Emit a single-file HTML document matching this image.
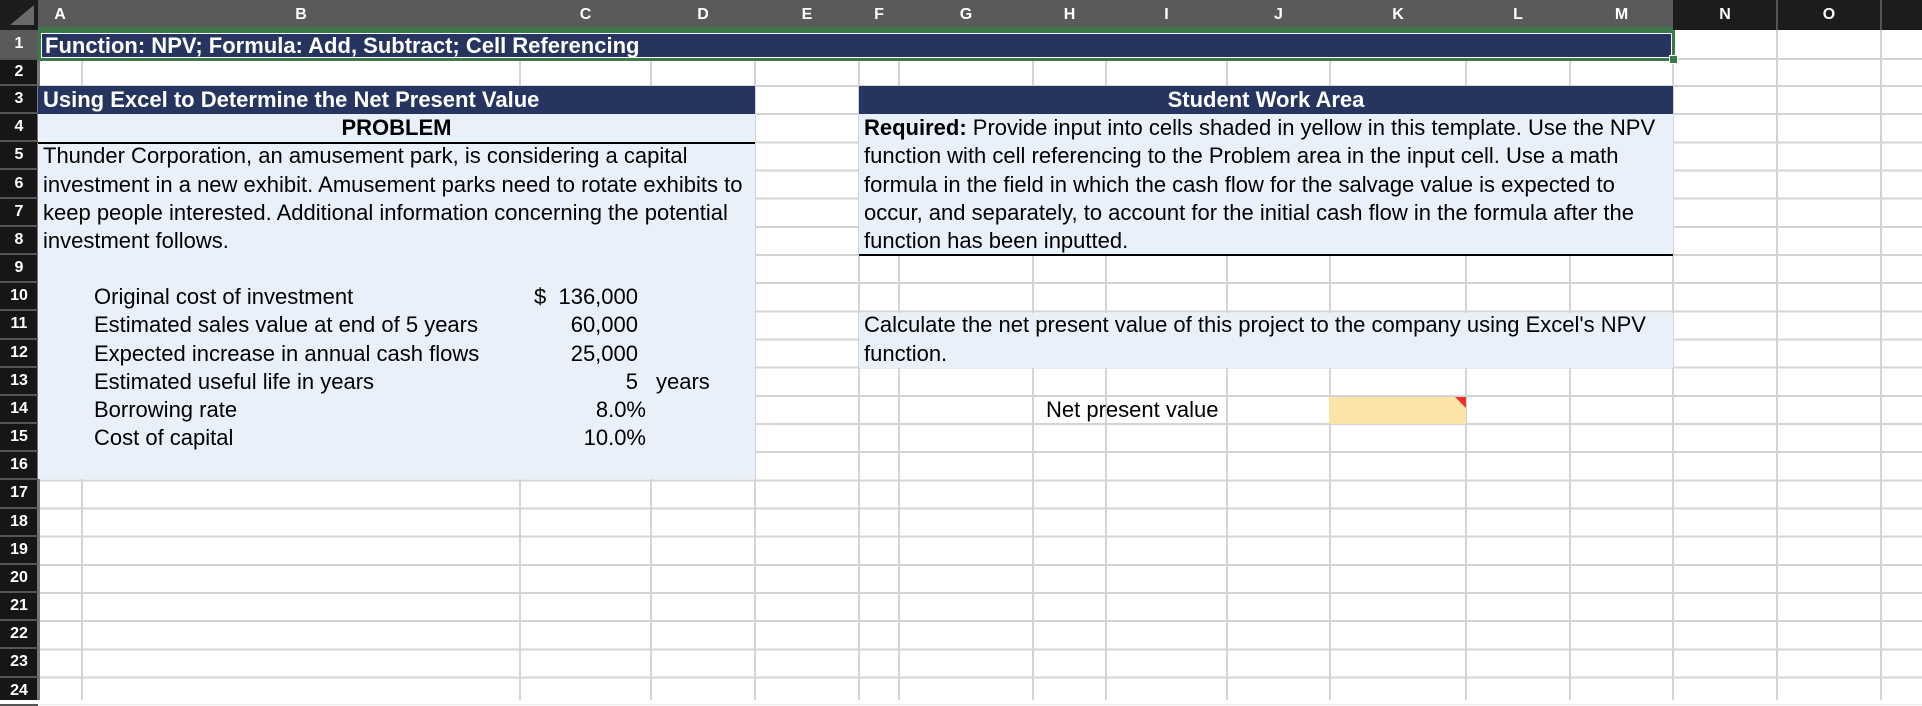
<!DOCTYPE html>
<html><head><meta charset="utf-8"><style>
*{margin:0;padding:0;box-sizing:border-box}
body{width:1922px;height:700px;overflow:hidden;background:#fff;position:relative;font-family:"Liberation Sans",Arial,sans-serif;font-size:22px;color:#000}
.a{position:absolute}
.v{position:absolute;top:30px;height:670px;width:2px;background:#d4d4d4}
.hdr{position:absolute;top:0;height:30px;color:#fff;font-size:16px;font-weight:bold;text-align:center;line-height:30px}
.rn{position:absolute;left:0;width:38px;color:#fff;font-size:16px;font-weight:bold;text-align:center;border-bottom:2px solid #555}
.t{position:absolute;white-space:nowrap;line-height:28px;height:28px}
.r{text-align:right}
</style></head><body>
<div class="a" style="left:38px;top:58px;width:1884px;height:2px;background:#d4d4d4"></div>
<div class="a" style="left:38px;top:85px;width:1884px;height:620px;background:repeating-linear-gradient(to bottom,#d4d4d4 0 2px,transparent 2px 28.17px)"></div>
<div class="v" style="left:81px"></div><div class="v" style="left:519px"></div><div class="v" style="left:650px"></div><div class="v" style="left:754px"></div><div class="v" style="left:858px"></div><div class="v" style="left:898px"></div><div class="v" style="left:1032px"></div><div class="v" style="left:1105px"></div><div class="v" style="left:1226px"></div><div class="v" style="left:1329px"></div><div class="v" style="left:1465px"></div><div class="v" style="left:1569px"></div><div class="v" style="left:1672px"></div><div class="v" style="left:1776px"></div><div class="v" style="left:1880px"></div>

<div class="a" style="left:0;top:0;width:1922px;height:30px;background:#1c1c1c"></div>
<div class="a" style="left:38px;top:0;width:1635px;height:30px;background:#5a5a5a"></div>
<div class="a" style="left:38px;top:27px;width:1635px;height:3px;background:#3d7a4b"></div>
<svg class="a" style="left:4px;top:3px" width="32" height="24"><polygon points="30,2 30,22 6,22" fill="#6a6a6a"/></svg>
<div class="a" style="left:1776px;top:0;width:2px;height:30px;background:#555"></div>
<div class="a" style="left:1880px;top:0;width:2px;height:30px;background:#555"></div>
<div class="hdr" style="left:38px;width:44px">A</div>
<div class="hdr" style="left:82px;width:438px">B</div>
<div class="hdr" style="left:520px;width:131px">C</div>
<div class="hdr" style="left:651px;width:104px">D</div>
<div class="hdr" style="left:755px;width:104px">E</div>
<div class="hdr" style="left:859px;width:40px">F</div>
<div class="hdr" style="left:899px;width:134px">G</div>
<div class="hdr" style="left:1033px;width:73px">H</div>
<div class="hdr" style="left:1106px;width:121px">I</div>
<div class="hdr" style="left:1227px;width:103px">J</div>
<div class="hdr" style="left:1330px;width:136px">K</div>
<div class="hdr" style="left:1466px;width:104px">L</div>
<div class="hdr" style="left:1570px;width:103px">M</div>
<div class="hdr" style="left:1673px;width:104px">N</div>
<div class="hdr" style="left:1777px;width:104px">O</div>

<div class="a" style="left:0;top:30px;width:38px;height:670px;background:#161616"></div>
<div class="a" style="left:37px;top:30px;width:3px;height:670px;background:#777"></div>
<div class="rn" style="top:30px;height:30px;line-height:28px;background:#5a5a5a">1</div>
<div class="rn" style="top:60px;height:26px;line-height:24px">2</div>
<div class="rn" style="top:86px;height:28.17px;line-height:26px">3</div>
<div class="rn" style="top:114.2px;height:28.17px;line-height:26px">4</div>
<div class="rn" style="top:142.3px;height:28.17px;line-height:26px">5</div>
<div class="rn" style="top:170.5px;height:28.17px;line-height:26px">6</div>
<div class="rn" style="top:198.7px;height:28.17px;line-height:26px">7</div>
<div class="rn" style="top:226.9px;height:28.17px;line-height:26px">8</div>
<div class="rn" style="top:255px;height:28.17px;line-height:26px">9</div>
<div class="rn" style="top:283.2px;height:28.17px;line-height:26px">10</div>
<div class="rn" style="top:311.4px;height:28.17px;line-height:26px">11</div>
<div class="rn" style="top:339.5px;height:28.17px;line-height:26px">12</div>
<div class="rn" style="top:367.7px;height:28.17px;line-height:26px">13</div>
<div class="rn" style="top:395.9px;height:28.17px;line-height:26px">14</div>
<div class="rn" style="top:424px;height:28.17px;line-height:26px">15</div>
<div class="rn" style="top:452.2px;height:28.17px;line-height:26px">16</div>
<div class="rn" style="top:480.4px;height:28.17px;line-height:26px">17</div>
<div class="rn" style="top:508.5px;height:28.17px;line-height:26px">18</div>
<div class="rn" style="top:536.7px;height:28.17px;line-height:26px">19</div>
<div class="rn" style="top:564.9px;height:28.17px;line-height:26px">20</div>
<div class="rn" style="top:593px;height:28.17px;line-height:26px">21</div>
<div class="rn" style="top:621.2px;height:28.17px;line-height:26px">22</div>
<div class="rn" style="top:649.4px;height:28.17px;line-height:26px">23</div>
<div class="rn" style="top:677.5px;height:28.17px;line-height:26px">24</div>

<div class="a" style="left:38px;top:30px;width:1637px;height:31px;border:3px solid #3d7a4b;background:#fff;padding:1px">
  <div style="background:#253560;height:100%;color:#fff;font-weight:bold;line-height:23px;padding-left:3px;white-space:nowrap">Function: NPV; Formula: Add, Subtract; Cell Referencing</div>
</div>
<div class="a" style="left:1669px;top:55px;width:9px;height:9px;background:#3d7a4b;border:1px solid #fff"></div>

<div class="a" style="left:38px;top:86px;width:717px;height:28.2px;background:#253560"></div>
<div class="a" style="left:38px;top:114.2px;width:717px;height:365px;background:#e8f0fa"></div>
<div class="a" style="left:38px;top:141.5px;width:717px;height:2px;background:#000"></div>
<div class="t" style="left:43px;top:86px;color:#fff;font-weight:bold">Using Excel to Determine the Net Present Value</div>
<div class="t" style="left:38px;top:114px;width:717px;text-align:center;font-weight:bold">PROBLEM</div>
<div class="t" style="left:43px;top:142.3px">Thunder Corporation, an amusement park, is considering a capital</div>
<div class="t" style="left:43px;top:170.5px">investment in a new exhibit. Amusement parks need to rotate exhibits to</div>
<div class="t" style="left:43px;top:198.7px">keep people interested. Additional information concerning the potential</div>
<div class="t" style="left:43px;top:226.9px">investment follows.</div>

<div class="t" style="left:94px;top:283.2px">Original cost of investment</div>
<div class="t" style="left:94px;top:311.4px">Estimated sales value at end of 5 years</div>
<div class="t" style="left:94px;top:339.5px">Expected increase in annual cash flows</div>
<div class="t" style="left:94px;top:367.7px">Estimated useful life in years</div>
<div class="t" style="left:94px;top:395.9px">Borrowing rate</div>
<div class="t" style="left:94px;top:424px">Cost of capital</div>
<div class="t" style="left:534px;top:283.2px">$</div>
<div class="t r" style="left:500px;width:138px;top:283.2px">136,000</div>
<div class="t r" style="left:500px;width:138px;top:311.4px">60,000</div>
<div class="t r" style="left:500px;width:138px;top:339.5px">25,000</div>
<div class="t r" style="left:500px;width:138px;top:367.7px">5</div>
<div class="t" style="left:656px;top:367.7px">years</div>
<div class="t r" style="left:500px;width:146px;top:395.9px">8.0%</div>
<div class="t r" style="left:500px;width:146px;top:424px">10.0%</div>

<div class="a" style="left:859px;top:86px;width:814px;height:28.2px;background:#253560"></div>
<div class="t" style="left:859px;width:814px;top:86px;text-align:center;color:#fff;font-weight:bold">Student Work Area</div>
<div class="a" style="left:859px;top:114.2px;width:814px;height:140px;background:#e8f0fa"></div>
<div class="a" style="left:859px;top:253.5px;width:814px;height:2px;background:#000"></div>
<div class="t" style="left:864px;top:114.2px"><b>Required:</b> Provide input into cells shaded in yellow in this template. Use the NPV</div>
<div class="t" style="left:864px;top:142.3px">function with cell referencing to the Problem area in the input cell. Use a math</div>
<div class="t" style="left:864px;top:170.5px">formula in the field in which the cash flow for the salvage value is expected to</div>
<div class="t" style="left:864px;top:198.7px">occur, and separately, to account for the initial cash flow in the formula after the</div>
<div class="t" style="left:864px;top:226.9px">function has been inputted.</div>

<div class="a" style="left:859px;top:313px;width:814px;height:54.5px;background:#e8f0fa"></div>
<div class="t" style="left:864px;top:311.4px">Calculate the net present value of this project to the company using Excel's NPV</div>
<div class="t" style="left:864px;top:339.5px">function.</div>

<div class="t" style="left:1046px;top:395.9px">Net present value</div>
<div class="a" style="left:1329px;top:397px;width:137px;height:27px;background:#fae4a6"></div>
<svg class="a" style="left:1455px;top:397px" width="11" height="11"><polygon points="0,0 11,0 11,11" fill="#e8322b"/></svg>
</body></html>
